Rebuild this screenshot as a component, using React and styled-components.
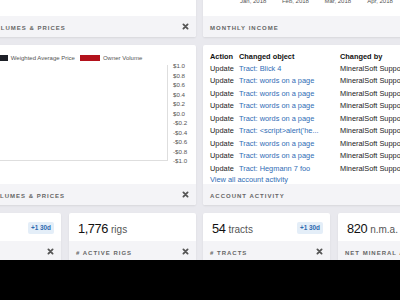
import React from 'react'
import styled, { createGlobalStyle } from 'styled-components'

const GlobalStyle = createGlobalStyle`
    html, body {
        margin: 0;
        padding: 0;
    }
    body {
        font-family: "Liberation Sans", Arial, sans-serif;
        background: #000;
    }
`

const activity = [
    'Tract: Blick 4',
    'Tract: words on a page',
    'Tract: words on a page',
    'Tract: words on a page',
    'Tract: words on a page',
    "Tract: <script>alert('he...",
    'Tract: words on a page',
    'Tract: words on a page',
    'Tract: Hegmann 7 foo',
]

const yTicks = ['$1.0', '$0.8', '$0.6', '$0.4', '$0.2', '$0.0', '-$0.2', '-$0.4', '-$0.6', '-$0.8', '-$1.0']
const months = ['Jan, 2018', 'Feb, 2018', 'Mar, 2018', 'Apr, 2018']

function CloseIcon() {
    return (
        <CloseSvg viewBox="0 0 10 10">
            <path d="M2 2L8 8M8 2L2 8" />
        </CloseSvg>
    )
}

function CardFooter({ title }) {
    return (
        <Footer>
            <Title>{title}</Title>
            <CloseIcon />
        </Footer>
    )
}

function StatCard({ value, unit, title, badge }) {
    return (
        <Card>
            <StatBody>
                <StatValue>
                    <Number>{value}</Number>
                    <Unit>{unit}</Unit>
                </StatValue>
                {badge && <Badge>{badge}</Badge>}
            </StatBody>
            <CardFooter title={title} />
        </Card>
    )
}

function App() {
    return (
        <Screen>
            <GlobalStyle />
            <Viewport>
                <Dashboard>
                    <Column>
                        <Card>
                            <Body h={100} />
                            <CardFooter title="Historical Volumes & Prices" />
                        </Card>
                        <Card>
                            <ChartBody>
                                <Legend>
                                    <LegendItem>
                                        <Swatch color="#1d2027" />
                                        Weighted Average Price
                                    </LegendItem>
                                    <LegendItem>
                                        <Swatch color="#b3121c" />
                                        Owner Volume
                                    </LegendItem>
                                </Legend>
                                <ChartRow>
                                    <Plot />
                                    <YAxis>
                                        {yTicks.map((t) => (
                                            <Tick key={t}>{t}</Tick>
                                        ))}
                                    </YAxis>
                                </ChartRow>
                            </ChartBody>
                            <CardFooter title="Projected Volumes & Prices" />
                        </Card>
                        <StatRow>
                            <StatCard value="3" unit="wells" title="# Wells" badge="+1 30d" />
                            <StatCard value="1,776" unit="rigs" title="# Active Rigs" />
                        </StatRow>
                    </Column>
                    <Column>
                        <Card>
                            <IncomeBody>
                                <XAxis>
                                    {months.map((m) => (
                                        <Month key={m}>{m}</Month>
                                    ))}
                                </XAxis>
                            </IncomeBody>
                            <CardFooter title="Monthly Income" />
                        </Card>
                        <Card>
                            <ActivityBody>
                                <ActivityRow h={11}>
                                    <Head>Action</Head>
                                    <Head>Changed object</Head>
                                    <Head>Changed by</Head>
                                </ActivityRow>
                                {activity.map((obj, i) => (
                                    <ActivityRow key={i} h={12.5}>
                                        <Cell>Update</Cell>
                                        <LinkText>{obj}</LinkText>
                                        <Cell>MineralSoft Support</Cell>
                                    </ActivityRow>
                                ))}
                                <ViewAll>View all account activity</ViewAll>
                            </ActivityBody>
                            <CardFooter title="Account Activity" />
                        </Card>
                        <StatRow>
                            <StatCard value="54" unit="tracts" title="# Tracts" badge="+1 30d" />
                            <StatCard value="820" unit="n.m.a." title="Net Mineral Acres" />
                        </StatRow>
                    </Column>
                </Dashboard>
            </Viewport>
            <BottomBar />
        </Screen>
    )
}

export default App

const Screen = styled.div`
    width: 400px;
    height: 300px;
    display: flex;
    flex-direction: column;
    overflow: hidden;
    background: #000;
`
const Viewport = styled.div`
    height: 260px;
    flex-shrink: 0;
    overflow: hidden;
    background: #e9e9ee;
`
const BottomBar = styled.div`
    flex: 1;
    background: #000;
`
const Dashboard = styled.div`
    display: grid;
    grid-template-columns: 262px 262px;
    column-gap: 7px;
    margin: -84px 0 0 -66px;
`
const Column = styled.div`
    display: flex;
    flex-direction: column;
    gap: 8px;
`
const Card = styled.div`
    background: #fff;
    border-radius: 2px;
    box-shadow: 0 1px 2px rgba(0, 0, 0, 0.08);
    overflow: hidden;
    display: flex;
    flex-direction: column;
`
const Body = styled.div`
    height: ${({ h }) => h}px;
`
const Footer = styled.div`
    height: 21px;
    flex-shrink: 0;
    background: #f4f4f7;
    display: flex;
    align-items: center;
    justify-content: space-between;
    padding: 0 7px;
`
const Title = styled.span`
    font-size: 6px;
    line-height: 8px;
    letter-spacing: 1px;
    font-weight: 700;
    color: #666;
    text-transform: uppercase;
    white-space: nowrap;
    padding-top: 2px;
`
const CloseSvg = styled.svg`
    width: 7px;
    height: 7px;
    flex-shrink: 0;
    path {
        stroke: #555;
        stroke-width: 2.6;
        stroke-linecap: round;
        fill: none;
    }
`
const ChartBody = styled.div`
    height: 139px;
    box-sizing: border-box;
    padding-top: 8px;
`
const Legend = styled.div`
    height: 10px;
    display: flex;
    justify-content: center;
    align-items: center;
    gap: 5px;
    font-size: 6px;
    color: #555;
`
const LegendItem = styled.div`
    display: flex;
    align-items: center;
    gap: 3px;
    white-space: nowrap;
`
const Swatch = styled.span`
    width: 20px;
    height: 6px;
    background: ${({ color }) => color};
`
const ChartRow = styled.div`
    display: flex;
    height: 96px;
    margin-top: 2px;
    padding-left: 10px;
`
const Plot = styled.div`
    flex: 1;
    border-right: 1px solid #dedede;
    border-bottom: 1px solid #dedede;
`
const YAxis = styled.div`
    width: 28px;
    box-sizing: border-box;
    padding-left: 5px;
    height: 103px;
    margin-top: -3px;
    display: flex;
    flex-direction: column;
    justify-content: space-between;
`
const Tick = styled.span`
    font-size: 6.2px;
    line-height: 8px;
    color: #555;
    white-space: nowrap;
`
const IncomeBody = styled.div`
    height: 100px;
    box-sizing: border-box;
    display: flex;
    flex-direction: column;
    justify-content: flex-end;
    padding: 0 0 11px 29px;
`
const XAxis = styled.div`
    display: grid;
    grid-template-columns: repeat(4, 42.3px);
`
const Month = styled.span`
    font-size: 6px;
    line-height: 8px;
    color: #555;
    text-align: center;
    white-space: nowrap;
`
const ActivityBody = styled.div`
    height: 139px;
    box-sizing: border-box;
    padding: 6.2px 0 0 7px;
    font-size: 7.4px;
`
const ActivityRow = styled.div`
    display: grid;
    grid-template-columns: 29px 101px 1fr;
    height: ${({ h }) => h}px;
    align-items: center;
    white-space: nowrap;
`
const Head = styled.span`
    font-weight: 700;
    color: #111;
`
const Cell = styled.span`
    color: #222;
`
const LinkText = styled.span`
    color: #2f6db5;
`
const ViewAll = styled.div`
    height: 10px;
    line-height: 10px;
    color: #2f6db5;
    white-space: nowrap;
`
const StatRow = styled.div`
    display: grid;
    grid-template-columns: 1fr 1fr;
    gap: 8px;
`
const StatBody = styled.div`
    height: 28px;
    box-sizing: border-box;
    padding: 2px 7px 0 9px;
    display: flex;
    align-items: center;
    justify-content: space-between;
`
const StatValue = styled.div`
    display: flex;
    align-items: baseline;
    gap: 3px;
    white-space: nowrap;
`
const Number = styled.span`
    font-size: 12.8px;
    letter-spacing: -0.4px;
    color: #111;
`
const Unit = styled.span`
    font-size: 10px;
    color: #555;
`
const Badge = styled.span`
    background: #e4eef8;
    color: #2b69b0;
    font-size: 6.4px;
    line-height: 8px;
    font-weight: 700;
    padding: 2px 3px;
    border-radius: 2px;
    white-space: nowrap;
`
